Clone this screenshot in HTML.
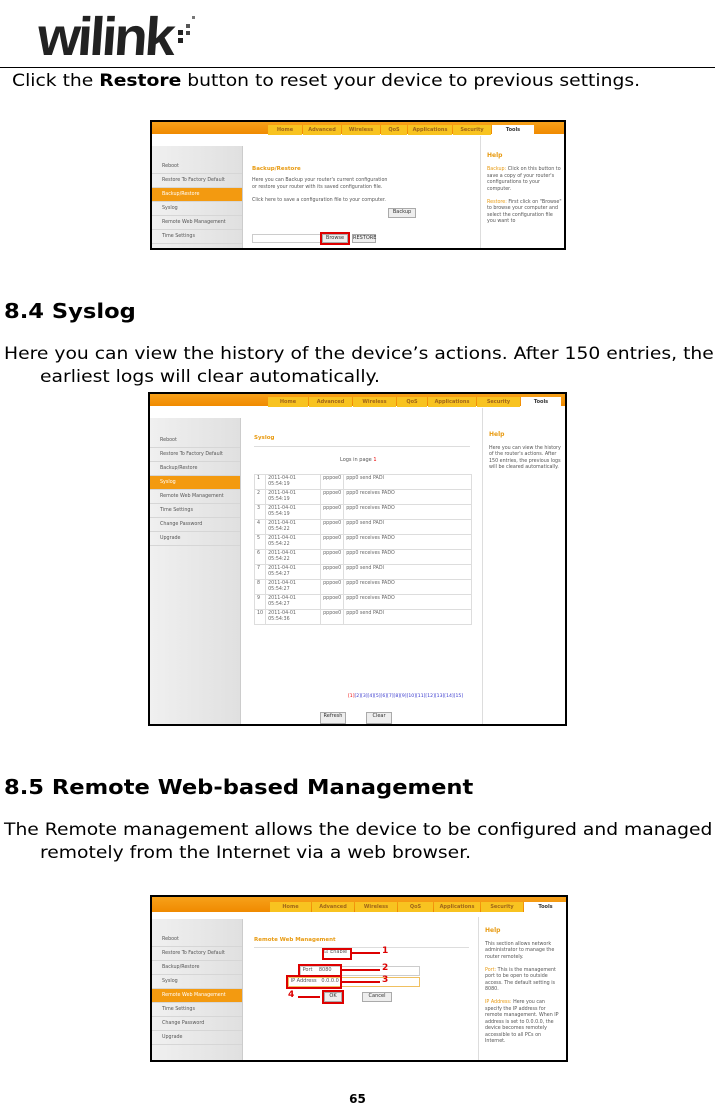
<!DOCTYPE html>
<html><head><meta charset="utf-8"><style>
body{margin:0;width:715px;height:1107px;position:relative;background:#fff;font-family:"DejaVu Sans","Liberation Sans",sans-serif;color:#000;overflow:hidden}
.a{position:absolute}
.t{font-size:16.5px;white-space:nowrap;transform:scaleX(1.135);transform-origin:0 0}
h2{position:absolute;margin:0;font-size:20px;font-weight:bold;white-space:nowrap;transform:scaleX(1.13);transform-origin:0 0}
.shot{position:absolute;border:2px solid #000;background:#fff;overflow:hidden;font-family:"DejaVu Sans",sans-serif;font-size:5px;color:#555}
.bar{position:absolute;left:0;right:0;top:0;height:12px;background:linear-gradient(#f7a11a,#f08a00)}
.tabs{position:absolute;top:3px;height:10px;display:flex;gap:1px}
.tabs div{background:#f8c320;color:#a0661a;font-weight:bold;text-align:center;line-height:10px;font-size:5px}
.tabs div.on{background:#fff;color:#333}
.side{position:absolute;left:0;top:24px;bottom:0;width:90px;background:linear-gradient(90deg,#f0f0f0,#e0e0e0);border-right:1px solid #ccc}
.side div{height:13px;line-height:13px;border-bottom:1px solid #d6d6d6;padding-left:10px;font-size:4.8px;color:#555}
.side div.on{background:#f39a10;color:#fff}
.help{position:absolute;top:14px;bottom:0;border-left:1px solid #ddd;padding:4px 6px;font-size:4.8px;line-height:6.5px;color:#555}
.help b{color:#e89a10;font-size:6px}
.ttl{position:absolute;color:#e89a10;font-weight:bold;font-size:5.5px}
table{border-collapse:collapse;position:absolute}
td{border:1px solid #ddd;font-size:4.8px;color:#666;padding:1px 2px;vertical-align:top;height:12px;line-height:5.5px}
.btn{position:absolute;border:1px solid #aaa;background:#eee;font-size:5px;text-align:center;color:#333}
.red{position:absolute;border:2px solid #d00}
</style></head><body>

<div class="a" style="left:40px;top:6px;font-family:'Liberation Sans',sans-serif;font-weight:bold;font-size:54px;letter-spacing:-3px;color:#222;transform:scaleX(1.02) skewX(-4deg);transform-origin:0 0">wilink</div>
<div class="a" style="left:178px;top:30px;width:5px;height:5px;background:#222"></div>
<div class="a" style="left:178px;top:38px;width:5px;height:5px;background:#222"></div>
<div class="a" style="left:186px;top:24px;width:4px;height:4px;background:#555"></div>
<div class="a" style="left:186px;top:31px;width:4px;height:4px;background:#444"></div>
<div class="a" style="left:192px;top:16px;width:3px;height:3px;background:#777"></div>
<div class="a" style="left:0;top:67px;width:715px;height:1px;background:#000"></div>
<div class="a t" style="left:12px;top:71px">Click the <b>Restore</b> button to reset your device to previous settings.</div>

<!-- shot 1 -->
<div class="shot" style="left:150px;top:120px;width:412px;height:126px">
 <div class="bar"></div>
 <div class="tabs" style="left:116px"><div style="width:34px">Home</div><div style="width:38px">Advanced</div><div style="width:38px">Wireless</div><div style="width:26px">QoS</div><div style="width:44px">Applications</div><div style="width:38px">Security</div><div class="on" style="width:42px">Tools</div></div>
 <div class="side"><div style="height:14px;background:none;border:0"></div><div>Reboot</div><div>Restore To Factory Default</div><div class="on">Backup/Restore</div><div>Syslog</div><div>Remote Web Management</div><div>Time Settings</div></div>
 <div class="ttl" style="left:100px;top:44px">Backup/Restore</div>
 <div class="a" style="left:100px;top:56px;width:140px;line-height:6.5px;font-size:4.8px">Here you can Backup your router's current configuration or restore your router with its saved configuration file.<br><br>Click here to save a configuration file to your computer.</div>
 <div class="btn" style="left:236px;top:86px;width:26px;height:8px">Backup</div>
 <div class="a" style="left:100px;top:112px;width:70px;height:7px;border:1px solid #ccc"></div>
 <div class="btn" style="left:170px;top:112px;width:24px;height:7px">Browse</div>
 <div class="red" style="left:168px;top:110px;width:26px;height:9px"></div>
 <div class="btn" style="left:200px;top:112px;width:22px;height:7px">RESTORE</div>
 <div class="help" style="left:328px;width:76px"><br><br><b>Help</b><br><br><span style="color:#e89a10">Backup:</span> Click on this button to save a copy of your router's configurations to your computer.<br><br><span style="color:#e89a10">Restore:</span> First click on "Browse" to browse your computer and select the configuration file you want to</div>
</div>

<h2 style="left:4px;top:299px">8.4 Syslog</h2>
<div class="a t" style="left:4px;top:344px">Here you can view the history of the device’s actions. After 150 entries, the</div>
<div class="a t" style="left:40px;top:367px">earliest logs will clear automatically.</div>

<!-- shot 2 -->
<div class="shot" style="left:148px;top:392px;width:415px;height:330px">
 <div class="bar"></div>
 <div class="tabs" style="left:118px"><div style="width:40px">Home</div><div style="width:43px">Advanced</div><div style="width:43px">Wireless</div><div style="width:30px">QoS</div><div style="width:48px">Applications</div><div style="width:43px">Security</div><div class="on" style="width:40px">Tools</div></div>
 <div class="side"><div style="height:16px;background:none;border:0"></div><div>Reboot</div><div>Restore To Factory Default</div><div>Backup/Restore</div><div class="on">Syslog</div><div>Remote Web Management</div><div>Time Settings</div><div>Change Password</div><div>Upgrade</div></div>
 <div class="ttl" style="left:104px;top:41px">Syslog</div>
 <div class="a" style="left:104px;top:52px;width:216px;height:1px;background:#ddd"></div>
 <div class="a" style="left:190px;top:63px">Logs in page <span style="color:#e00">1</span></div>
 <table style="left:104px;top:80px;width:218px">
 <tr><td style="width:6px">1</td><td style="width:50px">2011-04-01<br>05:54:19</td><td style="width:18px">pppoe0</td><td>ppp0 send PADI</td></tr>
 <tr><td>2</td><td>2011-04-01<br>05:54:19</td><td>pppoe0</td><td>ppp0 receives PADO</td></tr>
 <tr><td>3</td><td>2011-04-01<br>05:54:19</td><td>pppoe0</td><td>ppp0 receives PADO</td></tr>
 <tr><td>4</td><td>2011-04-01<br>05:54:22</td><td>pppoe0</td><td>ppp0 send PADI</td></tr>
 <tr><td>5</td><td>2011-04-01<br>05:54:22</td><td>pppoe0</td><td>ppp0 receives PADO</td></tr>
 <tr><td>6</td><td>2011-04-01<br>05:54:22</td><td>pppoe0</td><td>ppp0 receives PADO</td></tr>
 <tr><td>7</td><td>2011-04-01<br>05:54:27</td><td>pppoe0</td><td>ppp0 send PADI</td></tr>
 <tr><td>8</td><td>2011-04-01<br>05:54:27</td><td>pppoe0</td><td>ppp0 receives PADO</td></tr>
 <tr><td>9</td><td>2011-04-01<br>05:54:27</td><td>pppoe0</td><td>ppp0 receives PADO</td></tr>
 <tr><td>10</td><td>2011-04-01<br>05:54:36</td><td>pppoe0</td><td>ppp0 send PADI</td></tr>
 </table>
 <div class="a" style="left:198px;top:300px;color:#33c;font-size:4.6px"><span style="color:#e00">[1]</span>[2][3][4][5][6][7][8][9][10][11][12][13][14][15]</div>
 <div class="btn" style="left:170px;top:318px;width:24px;height:10px">Refresh</div>
 <div class="btn" style="left:216px;top:318px;width:24px;height:10px">Clear</div>
 <div class="help" style="left:332px;width:74px"><br><br><br><b>Help</b><br><br>Here you can view the history of the router's actions. After 150 entries, the previous logs will be cleared automatically.</div>
</div>

<h2 style="left:4px;top:775px">8.5 Remote Web-based Management</h2>
<div class="a t" style="left:4px;top:820px">The Remote management allows the device to be configured and managed</div>
<div class="a t" style="left:40px;top:843px">remotely from the Internet via a web browser.</div>

<!-- shot 3 -->
<div class="shot" style="left:150px;top:895px;width:414px;height:163px">
 <div class="bar" style="height:15px"></div>
 <div class="tabs" style="left:118px;top:5px"><div style="width:41px">Home</div><div style="width:42px">Advanced</div><div style="width:42px">Wireless</div><div style="width:35px">QoS</div><div style="width:46px">Applications</div><div style="width:42px">Security</div><div class="on" style="width:43px">Tools</div></div>
 <div class="side" style="top:22px"><div style="height:14px;background:none;border:0"></div><div>Reboot</div><div>Restore To Factory Default</div><div>Backup/Restore</div><div>Syslog</div><div class="on">Remote Web Management</div><div>Time Settings</div><div>Change Password</div><div>Upgrade</div></div>
 <div class="ttl" style="left:102px;top:40px">Remote Web Management</div>
 <div class="a" style="left:102px;top:50px;width:215px;height:1px;background:#ddd"></div>
 <div class="a" style="left:172px;top:52px">☑ Enable</div>
 <div class="red" style="left:170px;top:51px;width:26px;height:8px"></div>
 <div class="a" style="left:148px;top:69px;width:118px;height:8px;border:1px solid #ccc">&nbsp;Port &nbsp;&nbsp; 8080</div>
 <div class="red" style="left:146px;top:67px;width:40px;height:10px"></div>
 <div class="a" style="left:136px;top:80px;width:130px;height:8px;border:1px solid #f0c060">&nbsp;IP Address &nbsp; 0.0.0.0</div>
 <div class="red" style="left:134px;top:78px;width:52px;height:10px"></div>
 <div class="btn" style="left:172px;top:95px;width:16px;height:8px">OK</div>
 <div class="red" style="left:170px;top:93px;width:18px;height:10px"></div>
 <div class="btn" style="left:210px;top:95px;width:28px;height:8px">Cancel</div>
 <div class="a" style="left:198px;top:55px;width:30px;height:2px;background:#d00"></div><div class="a" style="left:230px;top:49px;color:#d00;font-weight:bold;font-size:9px">1</div>
 <div class="a" style="left:188px;top:72px;width:40px;height:2px;background:#d00"></div><div class="a" style="left:230px;top:66px;color:#d00;font-weight:bold;font-size:9px">2</div>
 <div class="a" style="left:188px;top:84px;width:40px;height:2px;background:#d00"></div><div class="a" style="left:230px;top:78px;color:#d00;font-weight:bold;font-size:9px">3</div>
 <div class="a" style="left:146px;top:99px;width:22px;height:2px;background:#d00"></div><div class="a" style="left:136px;top:93px;color:#d00;font-weight:bold;font-size:9px">4</div>
 <div class="help" style="left:326px;width:74px;top:20px"><br><b>Help</b><br><br>This section allows network administrator to manage the router remotely.<br><br><span style="color:#e89a10">Port:</span> This is the management port to be open to outside access. The default setting is 8080.<br><br><span style="color:#e89a10">IP Address:</span> Here you can specify the IP address for remote management. When IP address is set to 0.0.0.0, the device becomes remotely accessible to all PCs on Internet.</div>
</div>

<div class="a" style="left:0;width:715px;top:1092px;text-align:center;font-weight:bold;font-size:12px">65</div>
</body></html>
